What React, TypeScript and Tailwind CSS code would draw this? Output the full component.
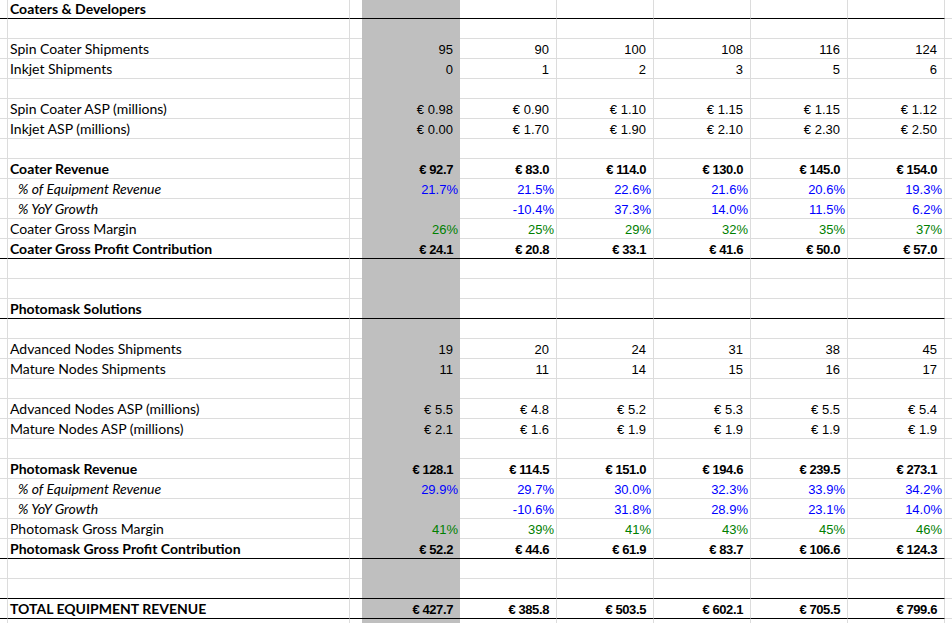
import React from "react";

type Kind = "blank" | "title" | "num" | "eur" | "total" | "share" | "growth" | "margin";

type Row = {
  kind: Kind;
  label?: string;
  values?: string[];
  rule?: boolean;
};

const rows: Row[] = [
  { kind: "title", label: "Coaters & Developers", rule: true },
  { kind: "blank" },
  { kind: "num", label: "Spin Coater Shipments", values: ["95", "90", "100", "108", "116", "124"] },
  { kind: "num", label: "Inkjet Shipments", values: ["0", "1", "2", "3", "5", "6"] },
  { kind: "blank" },
  { kind: "eur", label: "Spin Coater ASP (millions)", values: ["€ 0.98", "€ 0.90", "€ 1.10", "€ 1.15", "€ 1.15", "€ 1.12"] },
  { kind: "eur", label: "Inkjet ASP (millions)", values: ["€ 0.00", "€ 1.70", "€ 1.90", "€ 2.10", "€ 2.30", "€ 2.50"] },
  { kind: "blank" },
  { kind: "total", label: "Coater Revenue", values: ["€ 92.7", "€ 83.0", "€ 114.0", "€ 130.0", "€ 145.0", "€ 154.0"] },
  { kind: "share", label: "% of Equipment Revenue", values: ["21.7%", "21.5%", "22.6%", "21.6%", "20.6%", "19.3%"] },
  { kind: "growth", label: "% YoY Growth", values: ["", "-10.4%", "37.3%", "14.0%", "11.5%", "6.2%"] },
  { kind: "margin", label: "Coater Gross Margin", values: ["26%", "25%", "29%", "32%", "35%", "37%"] },
  { kind: "total", label: "Coater Gross Profit Contribution", values: ["€ 24.1", "€ 20.8", "€ 33.1", "€ 41.6", "€ 50.0", "€ 57.0"], rule: true },
  { kind: "blank" },
  { kind: "blank" },
  { kind: "title", label: "Photomask Solutions", rule: true },
  { kind: "blank" },
  { kind: "num", label: "Advanced Nodes Shipments", values: ["19", "20", "24", "31", "38", "45"] },
  { kind: "num", label: "Mature Nodes Shipments", values: ["11", "11", "14", "15", "16", "17"] },
  { kind: "blank" },
  { kind: "eur", label: "Advanced Nodes ASP (millions)", values: ["€ 5.5", "€ 4.8", "€ 5.2", "€ 5.3", "€ 5.5", "€ 5.4"] },
  { kind: "eur", label: "Mature Nodes ASP (millions)", values: ["€ 2.1", "€ 1.6", "€ 1.9", "€ 1.9", "€ 1.9", "€ 1.9"] },
  { kind: "blank" },
  { kind: "total", label: "Photomask Revenue", values: ["€ 128.1", "€ 114.5", "€ 151.0", "€ 194.6", "€ 239.5", "€ 273.1"] },
  { kind: "share", label: "% of Equipment Revenue", values: ["29.9%", "29.7%", "30.0%", "32.3%", "33.9%", "34.2%"] },
  { kind: "growth", label: "% YoY Growth", values: ["", "-10.6%", "31.8%", "28.9%", "23.1%", "14.0%"] },
  { kind: "margin", label: "Photomask Gross Margin", values: ["41%", "39%", "41%", "43%", "45%", "46%"] },
  { kind: "total", label: "Photomask Gross Profit Contribution", values: ["€ 52.2", "€ 44.6", "€ 61.9", "€ 83.7", "€ 106.6", "€ 124.3"], rule: true },
  { kind: "blank" },
  { kind: "blank", rule: true },
  { kind: "total", label: "TOTAL EQUIPMENT REVENUE", values: ["€ 427.7", "€ 385.8", "€ 503.5", "€ 602.1", "€ 705.5", "€ 799.6"], rule: true },
  { kind: "blank" },
];

function labelClass(kind: Kind) {
  if (kind === "title" || kind === "total") return "pl-[2px] font-bold";
  if (kind === "share" || kind === "growth") return "pl-[10px] italic";
  return "pl-[2px]";
}

function valueClass(kind: Kind) {
  if (kind === "total") return "pr-[7px] font-bold text-black tracking-[-0.4px]";
  if (kind === "share" || kind === "growth") return "pr-[2px] text-[#0000ff]";
  if (kind === "margin") return "pr-[2px] text-[#008000]";
  return "pr-[7px] text-black";
}

function SheetRow({ row }: { row: Row }) {
  const line = row.rule ? "border-black" : "border-[#dcdcdc]";
  const values = row.values ?? ["", "", "", "", "", ""];
  const num = valueClass(row.kind);

  return (
    <div className="flex h-[20px]">
      <div className={`w-[8px] shrink-0 border-b border-r border-r-[#dcdcdc] ${line}`} />
      <div
        className={`flex w-[342px] shrink-0 items-center whitespace-nowrap border-b border-r border-r-[#dcdcdc] font-[family-name:Lato,sans-serif] text-[14px] text-black ${line} ${labelClass(row.kind)}`}
      >
        {row.label}
      </div>
      <div className={`w-[12px] shrink-0 border-b ${line}`} />
      <div
        className={`flex w-[98px] shrink-0 items-center justify-end border-b bg-[#bfbfbf] pt-[3px] font-[family-name:Liberation_Sans,Arial,sans-serif] text-[13px] ${row.rule ? "border-black" : "border-[#bfbfbf]"} ${num}`}
      >
        {values[0]}
      </div>
      {values.slice(1).map((v, i) => (
        <div
          key={i}
          className={`flex w-[97px] shrink-0 items-center justify-end border-b border-r border-r-[#dcdcdc] pt-[3px] font-[family-name:Liberation_Sans,Arial,sans-serif] text-[13px] ${line} ${num}`}
        >
          {v}
        </div>
      ))}
      <div className="flex-1 border-b border-[#dcdcdc]" />
    </div>
  );
}

export default function App() {
  return (
    <div className="h-[623px] w-[952px] overflow-hidden bg-white">
      <div className="-mt-[1px]">
        {rows.map((row, i) => (
          <SheetRow key={i} row={row} />
        ))}
      </div>
    </div>
  );
}
